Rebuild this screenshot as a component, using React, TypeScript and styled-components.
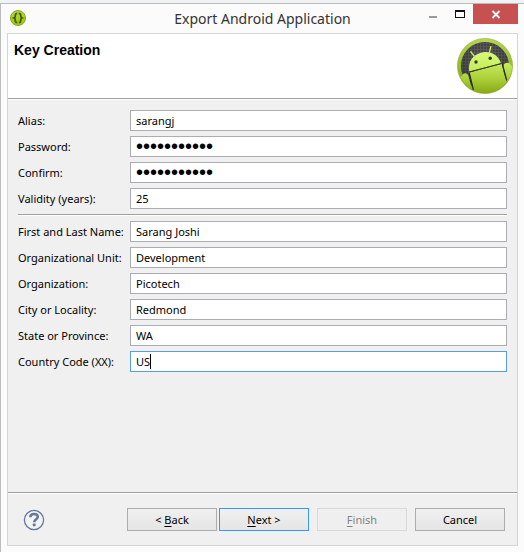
import React, { useId } from "react";
import styled, { createGlobalStyle, css } from "styled-components";

const GlobalStyle = createGlobalStyle`
  *, *::before, *::after { box-sizing: border-box; }
  body {
    margin: 0;
    background: #f1f2f4;
    color: #000;
    font-family: "Noto Sans", "Open Sans", sans-serif;
    font-size: 11px;
    overflow: hidden;
  }
  button, input { font: inherit; color: inherit; }
`;

const Desktop = styled.div`
  display: flex;
  min-height: 100vh;
  padding-top: 3px;
`;

const Window = styled.main`
  flex: 1;
  display: flex;
  flex-direction: column;
  padding: 0 6px 6px;
  background: #fbfbfb;
  border-top: 1px solid #bcbcbe;
  border-left: 1px solid #bcbcbe;
`;

const TitleBar = styled.header`
  display: grid;
  grid-template-columns: 96px 1fr 96px;
  height: 29px;
`;

const AppIcon = styled.svg`
  width: 18px;
  height: 18px;
  margin: 5px 0 0 2px;
`;

const WindowTitle = styled.h1`
  margin: 0;
  font-size: 14px;
  font-weight: 400;
  line-height: 29px;
  text-align: center;
  color: #333;
  white-space: nowrap;
`;

const WindowControls = styled.div`
  display: flex;
  align-items: flex-start;
  justify-content: flex-end;
`;

const ControlButton = styled.button<{ $close?: boolean }>`
  width: ${(p) => (p.$close ? 45 : 27)}px;
  height: 20px;
  flex: none;
  padding: 0;
  border: 0;
  background: ${(p) => (p.$close ? "#c75050" : "transparent")};

  svg { display: block; width: 100%; height: 100%; }
`;

const Dialog = styled.section`
  flex: 1;
  display: flex;
  flex-direction: column;
  border: 1px solid #d5d5d5;
  background: #f0f0f0;
`;

const Banner = styled.div`
  display: flex;
  justify-content: space-between;
  align-items: flex-start;
  height: 65px;
  padding: 3px 3px 0 6px;
  background: #fff;
  border-bottom: 1px solid #a0a0a0;
`;

const PageTitle = styled.h2`
  margin: 5px 0 0;
  font: 700 14px/16px "Liberation Sans", Arial, sans-serif;
`;

const AndroidLogo = styled.svg`
  width: 58px;
  height: 58px;
`;

const Form = styled.form`
  flex: 1;
  display: flex;
  flex-direction: column;
  border-top: 1px solid #fff;
`;

const Fields = styled.div`
  flex: 1;
  padding: 10px 10px 0;
`;

const Group = styled.div`
  display: grid;
  gap: 5px;
`;

const Rule = styled.hr<{ $spaced?: boolean }>`
  width: 100%;
  height: 2px;
  margin: ${(p) => (p.$spaced ? "5px 0" : "0")};
  border: 0;
  border-top: 1px solid #a0a0a0;
  border-bottom: 1px solid #fff;
`;

const Row = styled.div`
  display: grid;
  grid-template-columns: 112px 1fr;
  align-items: center;
`;

const Label = styled.label`
  line-height: 21px;
  white-space: nowrap;
`;

const InputBox = styled.div`
  position: relative;
  display: flex;
`;

const Input = styled.input<{ $active?: boolean }>`
  width: 100%;
  height: 21px;
  padding: 0 5px;
  border: 1px solid ${(p) => (p.$active ? "#569de5" : "#abadb3")};
  border-radius: 0;
  background: #fff;
  outline: 0;

  ${(p) =>
    p.type === "password" &&
    css`
      font-family: "Liberation Sans", Arial, sans-serif;
      font-size: 20px;
    `}
`;

const Caret = styled.span`
  position: absolute;
  top: 3px;
  left: 20px;
  width: 1px;
  height: 15px;
  background: #000;
`;

const Footer = styled.footer`
  display: flex;
  align-items: center;
  padding: 14px 12px 14px 15px;
`;

const HelpButton = styled.button`
  width: 22px;
  height: 22px;
  margin-right: auto;
  padding: 0;
  border: 0;
  background: none;

  svg { display: block; }
`;

const Actions = styled.div`
  display: flex;
  gap: 8px;
`;

const Steps = styled.div`
  display: flex;
  gap: 2px;
`;

const PushButton = styled.button<{ $primary?: boolean }>`
  width: 90px;
  height: 23px;
  padding: 0;
  line-height: 20px;
  border: 1px solid ${(p) => (p.$primary ? "#3399ff" : "#acacac")};
  border-radius: 0;
  background: linear-gradient(#f0f0f0, #e5e5e5);

  &:disabled {
    color: #838383;
    border-color: #d9d9d9;
    background: #efefef;
  }

  u { text-underline-offset: 2px; }
`;

type FieldProps = {
  label: string;
  value: string;
  type?: "text" | "password";
  active?: boolean;
};

function Field({ label, value, type = "text", active }: FieldProps) {
  const id = useId();
  return (
    <Row>
      <Label htmlFor={id}>{label}</Label>
      <InputBox>
        <Input id={id} type={type} defaultValue={value} $active={active} autoComplete="off" />
        {active && <Caret aria-hidden="true" />}
      </InputBox>
    </Row>
  );
}

const keyFields: FieldProps[] = [
  { label: "Alias:", value: "sarangj" },
  { label: "Password:", value: "abcdefghijk", type: "password" },
  { label: "Confirm:", value: "abcdefghijk", type: "password" },
  { label: "Validity (years):", value: "25" },
];

const ownerFields: FieldProps[] = [
  { label: "First and Last Name:", value: "Sarang Joshi" },
  { label: "Organizational Unit:", value: "Development" },
  { label: "Organization:", value: "Picotech" },
  { label: "City or Locality:", value: "Redmond" },
  { label: "State or Province:", value: "WA" },
  { label: "Country Code (XX):", value: "US", active: true },
];

function BracesIcon() {
  return (
    <AppIcon viewBox="0 0 18 18" aria-hidden="true">
      <defs>
        <linearGradient id="braces-bg" x1="0" y1="0" x2="0" y2="1">
          <stop offset="0" stopColor="#b5d636" />
          <stop offset="1" stopColor="#a0cc00" />
        </linearGradient>
      </defs>
      <circle cx="9" cy="9" r="7.5" fill="url(#braces-bg)" stroke="#84a520" />
      <g fill="none" stroke="#465214" strokeWidth="1.7">
        <path d="M8.2 4.4C6.6 4.4 6.3 5.2 6.3 6.5C6.3 8 6 8.6 5 9C6 9.4 6.3 10 6.3 11.5C6.3 12.8 6.6 13.6 8.2 13.6" />
        <path d="M9.8 4.4C11.4 4.4 11.7 5.2 11.7 6.5C11.7 8 12 8.6 13 9C12 9.4 11.7 10 11.7 11.5C11.7 12.8 11.4 13.6 9.8 13.6" />
      </g>
    </AppIcon>
  );
}

function Android() {
  return (
    <AndroidLogo viewBox="0 0 58 58" role="img" aria-label="Android">
      <defs>
        <linearGradient id="ring" x1="0" y1="0" x2="0" y2="1">
          <stop offset="0" stopColor="#b6d84c" />
          <stop offset="0.5" stopColor="#94bc2b" />
          <stop offset="1" stopColor="#7a9c0e" />
        </linearGradient>
        <linearGradient id="robot" gradientUnits="userSpaceOnUse" x1="0" y1="27" x2="0" y2="57">
          <stop offset="0" stopColor="#c5ea5a" />
          <stop offset="0.5" stopColor="#aacf38" />
          <stop offset="1" stopColor="#86a813" />
        </linearGradient>
        <linearGradient id="head" x1="0" y1="0" x2="0" y2="1">
          <stop offset="0" stopColor="#d9fb78" />
          <stop offset="1" stopColor="#c3e958" />
        </linearGradient>
        <pattern id="mesh" width="3" height="3" patternUnits="userSpaceOnUse">
          <rect width="3" height="3" fill="#505050" />
          <path d="M0 .5H3M.5 0V3" stroke="#6c6c6c" strokeWidth="0.8" />
        </pattern>
        <radialGradient id="shade" cx="0.5" cy="0.35" r="0.6">
          <stop offset="0" stopColor="#222" stopOpacity="0" />
          <stop offset="1" stopColor="#222" stopOpacity="0.55" />
        </radialGradient>
        <clipPath id="outer">
          <circle cx="29" cy="29" r="27" />
        </clipPath>
      </defs>
      <circle cx="29" cy="29" r="27.6" fill="url(#ring)" stroke="#91aa48" strokeWidth="0.6" />
      <circle cx="29" cy="29" r="24" fill="url(#mesh)" />
      <circle cx="29" cy="29" r="24" fill="url(#shade)" />
      <g clipPath="url(#outer)">
        <path d="M13.4 35.5L45.6 27L50.6 46L46 58H18Z" fill="url(#robot)" />
        <path d="M6 39C7 35 11.6 35.6 12.6 39.4L17.4 58L6 54L2 41Z" fill="url(#robot)" />
        <path d="M47.4 30C46.6 25.6 53 24 54.6 28L58 31L56 47L51 46Z" fill="url(#robot)" />
        <path d="M13.3 36L17.4 53M46.4 27L50.8 43.5" stroke="#27300c" strokeWidth="1.2" fill="none" />
      </g>
      <path d="M13.2 34.6C11.5 24 17.5 17.5 25 15.7C33 13.6 42 17.2 45 26.2Z" fill="url(#head)" />
      <path d="M13.2 35.1L45.4 26.5" stroke="#36400f" strokeWidth="1" />
      <path d="M18.6 19.6L14.8 14.7M33.3 15.8L34.8 9.8" stroke="#c6eb5f" strokeWidth="1.4" strokeLinecap="round" />
      <circle cx="20" cy="25" r="1.7" fill="#343d19" />
      <circle cx="34.2" cy="21.2" r="1.7" fill="#343d19" />
    </AndroidLogo>
  );
}

export default function App() {
  return (
    <>
      <GlobalStyle />
      <Desktop>
        <Window>
          <TitleBar>
            <BracesIcon />
            <WindowTitle>Export Android Application</WindowTitle>
            <WindowControls>
              <ControlButton type="button" aria-label="Minimize">
                <svg viewBox="0 0 27 20"><rect x="10" y="12" width="8" height="2" fill="#999" /></svg>
              </ControlButton>
              <ControlButton type="button" aria-label="Maximize">
                <svg viewBox="0 0 27 20">
                  <path d="M9 6H19V14H9ZM10 8V13H18V8Z" fill="#111" fillRule="evenodd" />
                </svg>
              </ControlButton>
              <ControlButton type="button" aria-label="Close" $close>
                <svg viewBox="0 0 45 20">
                  <path d="M19.5 7L26.5 14M26.5 7L19.5 14" stroke="#fff" strokeWidth="1.8" />
                </svg>
              </ControlButton>
            </WindowControls>
          </TitleBar>
          <Dialog>
            <Banner>
              <PageTitle>Key Creation</PageTitle>
              <Android />
            </Banner>
            <Form onSubmit={(e) => e.preventDefault()}>
              <Fields>
                <Group>
                  {keyFields.map((f) => <Field key={f.label} {...f} />)}
                </Group>
                <Rule $spaced />
                <Group>
                  {ownerFields.map((f) => <Field key={f.label} {...f} />)}
                </Group>
              </Fields>
              <Rule />
              <Footer>
                <HelpButton type="button" aria-label="Help">
                  <svg width="22" height="22" viewBox="0 0 22 22">
                    <circle cx="11" cy="11" r="9.6" fill="#f3f3f3" stroke="#65779a" strokeWidth="1.3" />
                    <path d="M7.3 8.2C7.3 5.8 9 4.9 11 4.9C13 4.9 14.8 5.9 14.8 7.8C14.8 10.2 11.2 10.4 11.2 13.3" fill="none" stroke="#65779a" strokeWidth="2.5" />
                    <rect x="9.8" y="14.6" width="2.8" height="2.6" rx="0.6" fill="#65779a" />
                  </svg>
                </HelpButton>
                <Actions>
                  <Steps>
                    <PushButton type="button">&lt; <u>B</u>ack</PushButton>
                    <PushButton type="submit" $primary><u>N</u>ext &gt;</PushButton>
                  </Steps>
                  <PushButton type="button" disabled><u>F</u>inish</PushButton>
                  <PushButton type="button">Cancel</PushButton>
                </Actions>
              </Footer>
            </Form>
          </Dialog>
        </Window>
      </Desktop>
    </>
  );
}
